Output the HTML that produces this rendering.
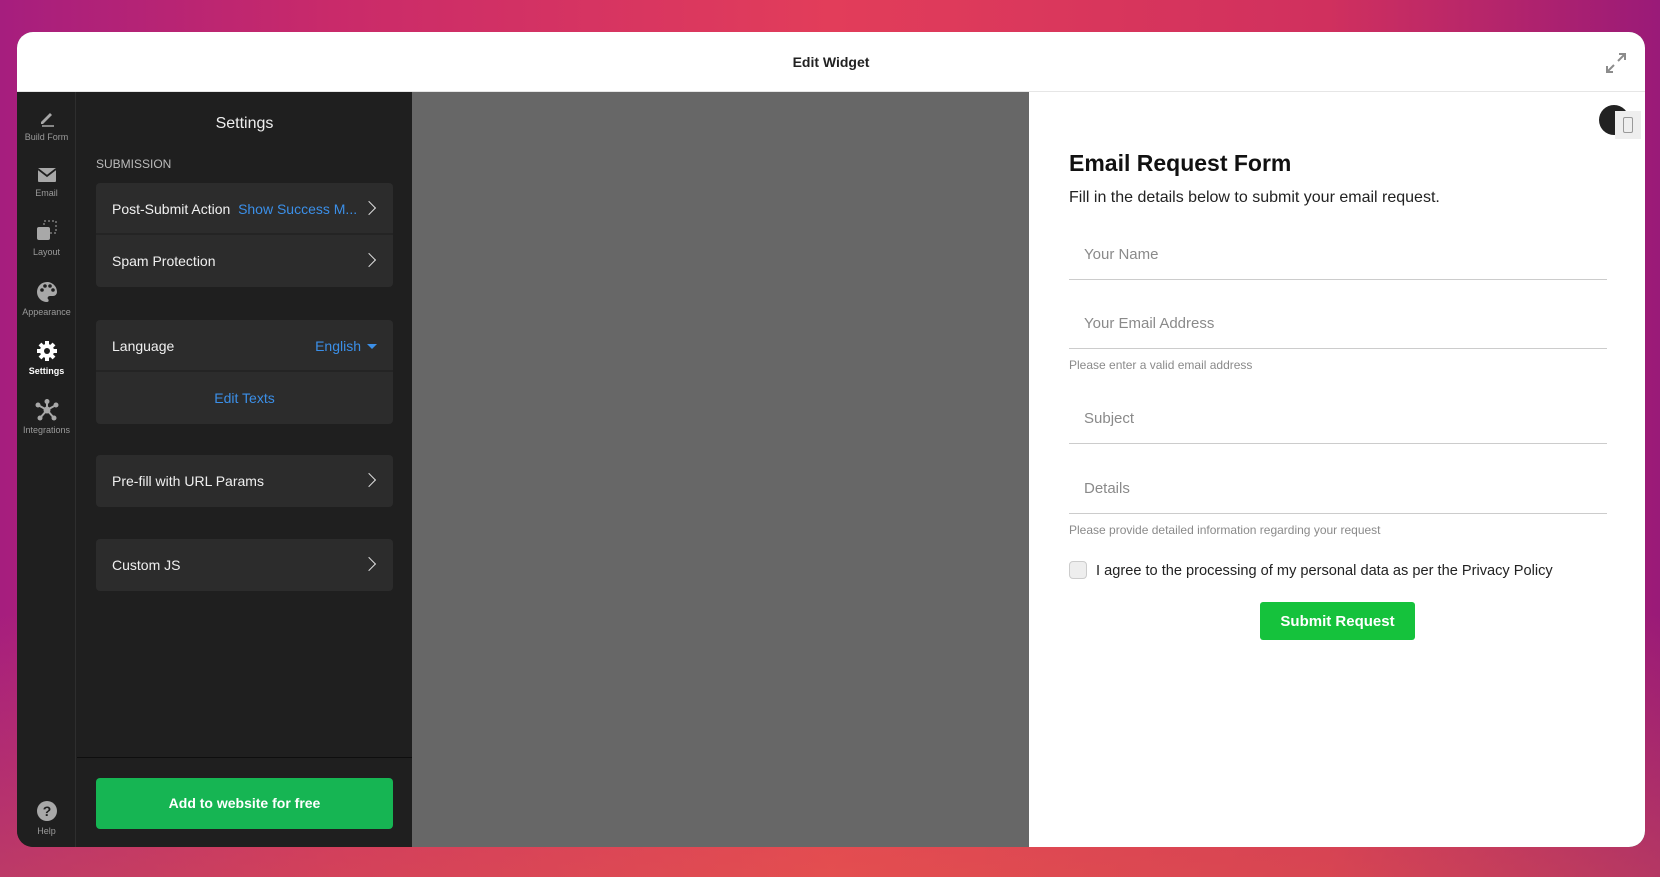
<!DOCTYPE html>
<html><head><meta charset="utf-8"><style>
*{box-sizing:border-box;margin:0;padding:0}
body{width:1660px;height:877px;overflow:hidden;position:relative;font-family:"Liberation Sans",sans-serif;
background:linear-gradient(180deg,rgba(0,0,0,0) 70%,rgba(230,110,60,.35) 100%),linear-gradient(90deg,#a61e7e 0%,#c92a6a 20%,#e23d5a 50%,#d0305e 80%,#9a1a78 100%);}
.win{position:absolute;left:17px;top:32px;width:1628px;height:815px;border-radius:16px;overflow:hidden;background:#1f1f1f}
.hdr{position:absolute;left:0;top:0;width:100%;height:60px;background:#fff;border-bottom:1px solid #e6e6e6}
.hdr .t{position:absolute;left:0;right:0;top:22px;text-align:center;font-size:14px;font-weight:bold;color:#222}
.rail{position:absolute;left:0;top:60px;width:59px;bottom:0;background:#1f1f1f;border-right:1px solid #2e2e2e}
.ri{position:absolute;left:0;width:59px;text-align:center;font-size:9px;color:#9a9a9a}
.ri svg{display:block;margin:0 auto 4px}
.panel{position:absolute;left:60px;top:60px;width:335px;bottom:0;background:#1f1f1f}
.panel h2{position:absolute;left:0;right:0;top:22px;text-align:center;font-weight:normal;font-size:16px;color:#eee;line-height:20px}
.sub{position:absolute;left:19px;top:65px;font-size:12px;color:#bbb}
.card{position:absolute;left:19px;width:297px;background:#2c2c2c;border-radius:4px}
.row{position:relative;height:52px;border-bottom:2px solid #242424;color:#f0f0f0;font-size:14px;line-height:52px;padding-left:16px}
.row:last-child{border-bottom:none}
.chev{position:absolute;right:19px;top:20px;width:10px;height:10px;border-right:1.6px solid #ddd;border-top:1.6px solid #ddd;transform:rotate(45deg)}
.blue{color:#3b8fe8}
.gray{position:absolute;left:395px;top:60px;width:617px;bottom:0;background:#676767}
.right{position:absolute;left:1012px;top:60px;right:0;bottom:0;background:#fff}
.f{position:absolute;left:40px;width:538px}
.inp{height:40px;border-bottom:1px solid #ccc;font-size:15px;color:#8a8a8a;padding:6px 0 0 15px}
.help{font-size:12px;color:#8a8a8a}
</style></head><body>
<div class="win">
 <div class="hdr"><div class="t">Edit Widget</div>
  <svg style="position:absolute;right:18px;top:20px" width="22" height="22" viewBox="0 0 22 22" fill="none" stroke="#8c8c8c" stroke-width="2"><path d="M13 9l7-7M14 2h6v6M9 13l-7 7M2 14v6h6"/></svg>
 </div>
 <div class="rail">
  <div class="ri" style="top:16px"><svg width="20" height="20" viewBox="0 0 20 20"><path d="M4 14l9-9 2 2-9 9H4z" fill="#a8a8a8"/><path d="M5 18h12" stroke="#a8a8a8" stroke-width="1.5"/></svg>Build Form</div>
  <div class="ri" style="top:74px"><svg width="20" height="18" viewBox="0 0 20 18"><rect x="1" y="2" width="18" height="14" rx="1" fill="#a8a8a8"/><path d="M1 3l9 7 9-7" stroke="#1f1f1f" stroke-width="1.8" fill="none"/></svg>Email</div>
  <div class="ri" style="top:127px"><svg width="24" height="24" viewBox="0 0 24 24"><rect x="9" y="2" width="12" height="12" fill="none" stroke="#a8a8a8" stroke-dasharray="2 2"/><rect x="2" y="8" width="13" height="13" rx="2" fill="#a8a8a8"/></svg>Layout</div>
  <div class="ri" style="top:189px"><svg width="22" height="22" viewBox="0 0 22 22"><path d="M11 1a10 10 0 0 0 0 20c2 0 2-2 1-3s0-3 2-3h3a4 4 0 0 0 4-4C21 5 16 1 11 1z" fill="#a8a8a8"/><circle cx="6" cy="9" r="1.8" fill="#1f1f1f"/><circle cx="9" cy="5" r="1.8" fill="#1f1f1f"/><circle cx="14" cy="5" r="1.8" fill="#1f1f1f"/><circle cx="17" cy="9" r="1.8" fill="#1f1f1f"/></svg>Appearance</div>
  <div class="ri" style="top:248px;color:#fff;font-weight:bold"><svg width="22" height="22" viewBox="0 0 22 22"><g fill="#fff"><circle cx="11" cy="11" r="7"/><g stroke="#fff" stroke-width="4"><path d="M11 1v20M1 11h20M4 4l14 14M18 4L4 18"/></g></g><circle cx="11" cy="11" r="3" fill="#1f1f1f"/></svg>Settings</div>
  <div class="ri" style="top:307px"><svg width="24" height="22" viewBox="0 0 24 22"><g stroke="#a8a8a8" stroke-width="2"><path d="M12 11L12 2M12 11L3 6M12 11L21 6M12 11L5 19M12 11L19 19"/></g><g fill="#a8a8a8"><circle cx="12" cy="11" r="3.5"/><circle cx="12" cy="2.5" r="2.5"/><circle cx="3" cy="6" r="2.5"/><circle cx="21" cy="6" r="2.5"/><circle cx="5" cy="19" r="2.5"/><circle cx="19" cy="19" r="2.5"/></g></svg>Integrations</div>
  <div class="ri" style="top:708px"><svg width="22" height="22" viewBox="0 0 22 22"><circle cx="11" cy="11" r="10" fill="#a8a8a8"/><text x="11" y="16" font-size="14" font-weight="bold" text-anchor="middle" fill="#1f1f1f" font-family="Liberation Sans">?</text></svg>Help</div>
 </div>
 <div class="panel">
  <h2>Settings</h2>
  <div class="sub">SUBMISSION</div>
  <div class="card" style="top:91px"><div class="row">Post-Submit Action&nbsp; <span class="blue">Show Success M...</span><i class="chev"></i></div><div class="row">Spam Protection<i class="chev"></i></div></div>
  <div class="card" style="top:228px"><div class="row">Language<span class="blue" style="position:absolute;right:32px">English</span><span style="position:absolute;right:16px;top:24px;border:5px solid transparent;border-top-color:#3b8fe8;border-bottom:none"></span></div><div class="row blue" style="text-align:center;padding:0;color:#3b8fe8">Edit Texts</div></div>
  <div class="card" style="top:363px"><div class="row">Pre-fill with URL Params<i class="chev"></i></div></div>
  <div class="card" style="top:447px"><div class="row">Custom JS<i class="chev"></i></div></div>
  <div style="position:absolute;left:0;right:0;top:665px;border-top:1px solid #0e0e0e"></div>
  <div style="position:absolute;left:19px;top:686px;width:297px;height:51px;background:#16b553;border-radius:4px;color:#fff;font-weight:bold;font-size:14px;text-align:center;line-height:51px">Add to website for free</div>
 </div>
 <div class="gray"></div>
 <div class="right">
  <div style="position:absolute;right:16px;top:13px;width:30px;height:30px;border-radius:50%;background:#222"></div>
  <div style="position:absolute;right:4px;top:19px;width:26px;height:28px;background:#eee"><div style="margin:6px 0 0 8px;width:10px;height:16px;border:1.5px solid #999;border-radius:2px"></div></div>
  <div class="f" style="top:58px;font-size:23px;font-weight:bold;color:#111">Email Request Form</div>
  <div class="f" style="top:97px;font-size:16px;color:#222">Fill in the details below to submit your email request.</div>
  <div class="f inp" style="top:148px">Your Name</div>
  <div class="f inp" style="top:217px">Your Email Address</div>
  <div class="f help" style="top:266px">Please enter a valid email address</div>
  <div class="f inp" style="top:312px">Subject</div>
  <div class="f inp" style="top:382px">Details</div>
  <div class="f help" style="top:431px">Please provide detailed information regarding your request</div>
  <div style="position:absolute;left:40px;top:469px;width:18px;height:18px;border:1px solid #ccc;border-radius:4px;background:#eee"></div>
  <div style="position:absolute;left:67px;top:471px;font-size:14.6px;color:#222">I agree to the processing of my personal data as per the Privacy Policy</div>
  <div style="position:absolute;left:231px;top:510px;width:155px;height:38px;background:#15c23c;border-radius:3px;color:#fff;font-weight:bold;font-size:15px;text-align:center;line-height:40px">Submit Request</div>
 </div>
</div>
</body></html>
